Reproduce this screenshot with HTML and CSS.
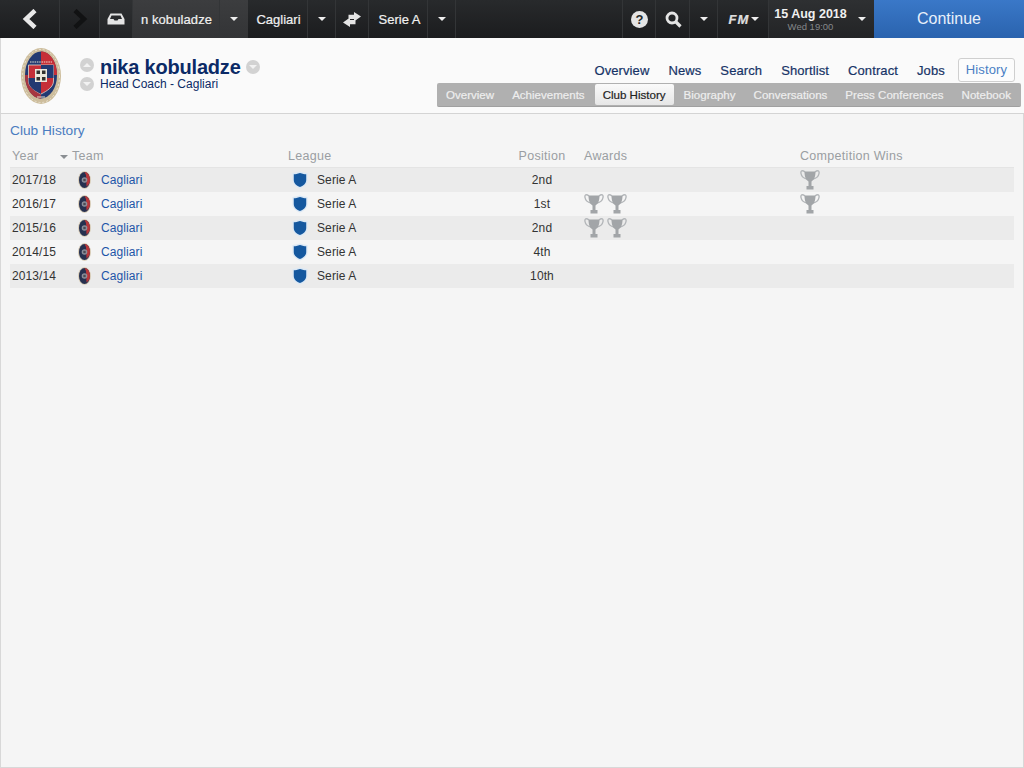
FILE: index.html
```html
<!DOCTYPE html>
<html>
<head>
    <title>Club History</title>
    <link rel="stylesheet" href="styles.css">
</head>
<body>
    <svg class="defs" width="0" height="0">
        <symbol id="crest" viewBox="0 0 40 56">
            <ellipse cx="20" cy="28" rx="20" ry="28" fill="#cdbd9c"/>
            <ellipse cx="20" cy="28" rx="18.500" ry="26.500" fill="none" stroke="#e9e2d2" stroke-width="1" stroke-dasharray="2 2"/>
            <ellipse cx="20" cy="27" rx="16" ry="23.500" fill="#233a72"/>
            <path d="M20 3.500C29 3.500 36 14 36 27H20Z" fill="#c62f38"/>
            <path d="M20 50.500C11 50.500 4 40 4 27H20Z" fill="#a83640"/>
            <path d="M7.500 17H32.500V33C32.500 39 26 43 20 46C14 43 7.500 39 7.500 33Z" fill="#c62f38" stroke="#ddd8cc" stroke-width=".8"/>
            <path d="M20 17H32.500V30H20ZM7.500 30H20V46C14 43 7.500 39 7.500 33Z" fill="#233a72"/>
            <rect x="14" y="21" width="12" height="13" fill="#ece8dc"/>
            <path d="M15.500 22.500h3.500v3.500h-3.500zM21 22.500h3.500v3.500h-3.500zM15.500 29h3.500v3.500h-3.500zM21 29h3.500v3.500h-3.500z" fill="#33312e"/>
            <path d="M9 14H31" stroke="#e6e0d0" stroke-width="1.200" stroke-dasharray="1.500 .8"/>
            <path d="M16 49H24" stroke="#e6e0d0" stroke-width="1"/>
        </symbol>
        <symbol id="crest-small" viewBox="0 0 13 18">
            <ellipse cx="6.500" cy="9" rx="6.500" ry="9" fill="#d8cdb8"/>
            <ellipse cx="6.500" cy="9" rx="5.500" ry="8" fill="#26304f"/>
            <path d="M6.500 1C10 1 12 5 12 9C12 12 10.500 14 8.500 15.500L8 4Z" fill="#b8363a"/>
            <circle cx="6.500" cy="9" r="2.800" fill="#8c8f9c"/>
            <rect x="5.300" y="7.800" width="2.400" height="2.400" fill="#4a4a55"/>
        </symbol>
        <symbol id="shield" viewBox="0 0 18 20">
            <path d="M9 .5C12 1.500 14.500 2 17.500 2V10C17.500 15 13 18 9 19.500C5 18 .5 15 .5 10V2C3.500 2 6 1.500 9 .5Z" fill="#dbe8f5"/>
            <path d="M9 2C12 3 14 3.500 16 3.500V10C16 14 12.500 16.500 9 18C5.500 16.500 2 14 2 10V3.500C4 3.500 6 3 9 2Z" fill="#15589f"/>
        </symbol>
        <symbol id="trophy" viewBox="0 0 20 22">
            <path d="M5 3C2 .5 .5 2 1 4.500C1.500 7.500 4 9.500 7 10" fill="none" stroke="#b4b7ba" stroke-width="1.400"/>
            <path d="M15 3C18 .5 19.500 2 19 4.500C18.500 7.500 16 9.500 13 10" fill="none" stroke="#b4b7ba" stroke-width="1.400"/>
            <path d="M4.500 2.500H15.500C15.500 8 14 11 11.500 12.500V17H13.500V20.500H6.500V17H8.500V12.500C6 11 4.500 8 4.500 2.500Z" fill="#a2a5a8"/>
        </symbol>
    </svg>

    <div class="topbar">
        <div class="seg seg-back">
            <svg width="16" height="20" viewBox="0 0 16 20"><path d="M13 1.500L4 10L13 18.500" fill="none" stroke="#e8e8e8" stroke-width="4.500"/></svg>
        </div>
        <div class="seg seg-forward">
            <svg width="16" height="20" viewBox="0 0 16 20"><path d="M3 1.500L12 10L3 18.500" fill="none" stroke="#111213" stroke-width="4.500"/></svg>
        </div>
        <div class="seg seg-inbox">
            <svg width="18" height="12" viewBox="0 0 18 12"><path d="M3.500 .5H14.500L17.500 6V11.500H.5V6ZM4.500 2.500L3 6H6.500L7.500 7.500H10.500L11.500 6H15L13.500 2.500Z" fill="#e4e4e4" fill-rule="evenodd"/></svg>
        </div>
        <div class="seg seg-name">n kobuladze</div>
        <div class="seg seg-drop seg-name-drop"><span class="caret"></span></div>
        <div class="seg seg-club">Cagliari</div>
        <div class="seg seg-drop"><span class="caret"></span></div>
        <div class="seg seg-swap">
            <svg width="18" height="15" viewBox="0 0 18 15"><path d="M11 0L18 4.500L11 9.500V7H5.500V2.800H11ZM7 5.500V8H12.500V12.200H7V15L0 10.500Z" fill="#e4e4e4"/></svg>
        </div>
        <div class="seg seg-league">Serie A</div>
        <div class="seg seg-drop"><span class="caret"></span></div>
        <div class="bar-gap"></div>
        <div class="seg seg-icon">
            <span class="help">?</span>
        </div>
        <div class="seg seg-search">
            <svg width="17" height="17" viewBox="0 0 17 17"><circle cx="7" cy="7" r="5" fill="none" stroke="#e4e4e4" stroke-width="2.800"/><path d="M10.500 10.500L15.500 15.500" stroke="#e4e4e4" stroke-width="3.200"/></svg>
        </div>
        <div class="seg seg-drop"><span class="caret"></span></div>
        <div class="seg seg-fm"><span class="fm">FM</span><span class="caret"></span></div>
        <div class="seg seg-date">
            <div class="date-text">
                <div class="date-main">15 Aug 2018</div>
                <div class="date-sub">Wed 19:00</div>
            </div>
            <span class="caret"></span>
        </div>
        <div class="continue">Continue</div>
    </div>

    <div class="header">
        <svg class="crest" width="40" height="56"><use href="#crest"/></svg>
        <div class="stepper">
            <span class="round"><span class="tri-up"></span></span>
            <span class="round"><span class="tri-down"></span></span>
        </div>
        <div class="person">
            <div class="person-name">nika kobuladze<span class="round"><span class="tri-down"></span></span></div>
            <div class="person-job">Head Coach - Cagliari</div>
        </div>
        <div class="menus">
            <div class="nav">
                <a class="nav-item">Overview</a>
                <a class="nav-item">News</a>
                <a class="nav-item">Search</a>
                <a class="nav-item">Shortlist</a>
                <a class="nav-item">Contract</a>
                <a class="nav-item">Jobs</a>
                <a class="nav-item nav-active">History</a>
            </div>
            <div class="subnav">
                <a class="sub-item">Overview</a>
                <a class="sub-item">Achievements</a>
                <a class="sub-item sub-active">Club History</a>
                <a class="sub-item">Biography</a>
                <a class="sub-item">Conversations</a>
                <a class="sub-item">Press Conferences</a>
                <a class="sub-item">Notebook</a>
            </div>
        </div>
    </div>

    <div class="content">
        <div class="panel-title">Club History</div>
        <div class="table">
            <div class="row row-head">
                <div class="col-year">Year<span class="sort"></span></div>
                <div>Team</div>
                <div>League</div>
                <div class="col-pos">Position</div>
                <div class="col-awards">Awards</div>
                <div>Competition Wins</div>
            </div>
            <div class="row">
                <div>2017/18</div>
                <div class="cell-team"><svg width="13" height="18"><use href="#crest-small"/></svg><a>Cagliari</a></div>
                <div class="cell-league"><svg width="16" height="18"><use href="#shield"/></svg>Serie A</div>
                <div class="col-pos">2nd</div>
                <div class="col-awards"></div>
                <div class="cups"><svg width="20" height="22"><use href="#trophy"/></svg></div>
            </div>
            <div class="row">
                <div>2016/17</div>
                <div class="cell-team"><svg width="13" height="18"><use href="#crest-small"/></svg><a>Cagliari</a></div>
                <div class="cell-league"><svg width="16" height="18"><use href="#shield"/></svg>Serie A</div>
                <div class="col-pos">1st</div>
                <div class="col-awards cups"><svg width="20" height="22"><use href="#trophy"/></svg><svg width="20" height="22"><use href="#trophy"/></svg></div>
                <div class="cups"><svg width="20" height="22"><use href="#trophy"/></svg></div>
            </div>
            <div class="row">
                <div>2015/16</div>
                <div class="cell-team"><svg width="13" height="18"><use href="#crest-small"/></svg><a>Cagliari</a></div>
                <div class="cell-league"><svg width="16" height="18"><use href="#shield"/></svg>Serie A</div>
                <div class="col-pos">2nd</div>
                <div class="col-awards cups"><svg width="20" height="22"><use href="#trophy"/></svg><svg width="20" height="22"><use href="#trophy"/></svg></div>
                <div></div>
            </div>
            <div class="row">
                <div>2014/15</div>
                <div class="cell-team"><svg width="13" height="18"><use href="#crest-small"/></svg><a>Cagliari</a></div>
                <div class="cell-league"><svg width="16" height="18"><use href="#shield"/></svg>Serie A</div>
                <div class="col-pos">4th</div>
                <div class="col-awards"></div>
                <div></div>
            </div>
            <div class="row">
                <div>2013/14</div>
                <div class="cell-team"><svg width="13" height="18"><use href="#crest-small"/></svg><a>Cagliari</a></div>
                <div class="cell-league"><svg width="16" height="18"><use href="#shield"/></svg>Serie A</div>
                <div class="col-pos">10th</div>
                <div class="col-awards"></div>
                <div></div>
            </div>
        </div>
    </div>
</body>
</html>
```

FILE: styles.css
```css
* {
    margin: 0;
    padding: 0;
    box-sizing: border-box;
}

html, body {
    height: 100%;
    overflow: hidden;
}

body {
    display: flex;
    flex-direction: column;
    background: #f5f5f5;
    font-family: "Liberation Sans", Arial, sans-serif;
    font-size: 12px;
    color: #333;
}

.defs {
    position: absolute;
}

/* top bar */
.topbar {
    display: flex;
    height: 38px;
    flex: none;
    background: linear-gradient(#282a2c, #1b1c1e);
    color: #f0f0f0;
    font-size: 13px;
    -webkit-text-stroke: 0.2px #f0f0f0;
}

.seg {
    display: flex;
    align-items: center;
    justify-content: center;
    flex: none;
    border-right: 1px solid #333537;
}

.seg-back { width: 60px; }
.seg-forward { width: 40px; }
.seg-inbox { width: 33px; background: linear-gradient(#2e3032, #232426); }
.seg-name { width: 87px; padding-left: 1px; letter-spacing: 0.1px; background: linear-gradient(#3c3d3f, #333436); }
.seg-name-drop { background: linear-gradient(#3c3d3f, #333436); border-right: none; }
.seg-drop { width: 28px; }
.seg-club { width: 60px; padding-left: 2px; }
.seg-swap { width: 33px; }
.seg-league { width: 59px; padding-left: 3px; }
.seg-icon { width: 33px; padding-left: 1px; }
.seg-search { width: 34px; padding-left: 1px; }
.seg-fm { width: 51px; gap: 2px; padding-left: 2px; }
.seg-date { width: 105px; gap: 11px; padding-right: 3px; background: linear-gradient(#2e3032, #232426); border-right: none; }

.bar-gap {
    flex: 1;
    border-right: 1px solid #333537;
}

.caret {
    width: 0;
    height: 0;
    border-left: 4px solid transparent;
    border-right: 4px solid transparent;
    border-top: 4px solid #eee;
}

.help {
    display: flex;
    align-items: center;
    justify-content: center;
    width: 17px;
    height: 17px;
    border-radius: 50%;
    background: #e4e4e4;
    color: #26282a;
    font-size: 13px;
    font-weight: bold;
    -webkit-text-stroke: 0;
}

.fm {
    font-size: 13px;
    font-weight: bold;
    font-style: italic;
    letter-spacing: 1px;
    color: #dcdcdc;
}

.date-main {
    font-size: 12.500px;
    font-weight: bold;
    -webkit-text-stroke: 0;
}

.date-sub {
    font-size: 9.500px;
    color: #85878a;
    text-align: center;
    -webkit-text-stroke: 0;
}

.continue {
    flex: none;
    width: 150px;
    display: flex;
    align-items: center;
    justify-content: center;
    background: linear-gradient(#3a78c8, #2a63ae);
    color: #e8f0fa;
    font-size: 16px;
    -webkit-text-stroke: 0;
}

/* person header */
.header {
    display: flex;
    flex: none;
    height: 76px;
    background: #fafafa;
    border-bottom: 1px solid #d4d4d4;
    border-left: 1px solid #d8d8d8;
    padding: 10px 3px 0 20px;
}

.stepper {
    display: flex;
    flex-direction: column;
    gap: 5px;
    margin: 10px 6px 0 19px;
}

.round {
    display: flex;
    align-items: center;
    justify-content: center;
    width: 14px;
    height: 14px;
    border-radius: 50%;
    background: #d2d2d2;
}

.tri-up {
    border-left: 4px solid transparent;
    border-right: 4px solid transparent;
    border-bottom: 4px solid #f2f2f2;
}

.tri-down {
    border-left: 4px solid transparent;
    border-right: 4px solid transparent;
    border-top: 4px solid #f2f2f2;
}

.person {
    margin-top: 7px;
    color: #0b2a66;
}

.person-name {
    display: flex;
    align-items: center;
    gap: 5px;
    font-size: 20px;
    font-weight: bold;
    line-height: 24px;
    letter-spacing: -0.2px;
}

.person-job {
    font-size: 12px;
    line-height: 12px;
    margin-top: -1px;
}

.menus {
    margin-left: auto;
    display: flex;
    flex-direction: column;
    align-items: flex-end;
    padding-top: 10px;
    gap: 1px;
}

.nav {
    display: flex;
    gap: 1px;
    padding-right: 6px;
}

.nav-item {
    padding: 0 8px;
    height: 24px;
    line-height: 23px;
    font-size: 13px;
    letter-spacing: 0.1px;
    color: #163366;
    border: 1px solid transparent;
    -webkit-text-stroke: 0.2px #163366;
}

.nav-active {
    margin-left: 3px;
    padding: 0 7px;
    line-height: 22px;
    color: #4a7fc4;
    background: #fcfcfc;
    border-color: #cfcfcf;
    border-radius: 3px;
    -webkit-text-stroke: 0;
}

.subnav {
    display: flex;
    gap: 2px;
    height: 24px;
    padding: 1px 2px 1px 1px;
    background: #b0b0b0;
    border-radius: 2px;
    border-bottom: 1px solid #a0a0a0;
}

.sub-item {
    padding: 0 8px;
    line-height: 22px;
    font-size: 11.550px;
    color: #eeeeee;
    -webkit-text-stroke: 0.2px #eeeeee;
}

.sub-active {
    color: #222;
    background: linear-gradient(#fafafa, #e6e6e6);
    border-radius: 2px;
    -webkit-text-stroke: 0.2px #222;
}

/* history table */
.content {
    flex: 1;
    padding: 9px 9px 0;
    border-left: 1px solid #d8d8d8;
    border-right: 1px solid #d8d8d8;
    border-bottom: 1px solid #d8d8d8;
}

.panel-title {
    font-size: 13.700px;
    line-height: 16px;
    color: #4a7cc0;
}

.table {
    margin-top: 9px;
}

.row {
    display: grid;
    grid-template-columns: 60px 216px 224px 60px 228px 1fr;
    align-items: center;
    height: 24px;
    padding-left: 2px;
    font-size: 12px;
    color: #333;
    letter-spacing: 0.1px;
}

.row:nth-child(even) {
    background: #ebebeb;
}

.row-head {
    height: 20px;
    padding-bottom: 3px;
    font-size: 12.500px;
    color: #9a9ea2;
    letter-spacing: 0.3px;
    border-bottom: 1px solid #e4e4e4;
}

.col-year {
    position: relative;
}

.sort {
    position: absolute;
    left: 48px;
    top: 6px;
    border-left: 4px solid transparent;
    border-right: 4px solid transparent;
    border-top: 4px solid #8a8e92;
}

.col-pos {
    text-align: center;
}

.col-awards {
    padding-left: 12px;
}

.cell-team,
.cell-league {
    display: flex;
    align-items: center;
}

.cell-team svg {
    margin: 0 10px 0 6px;
}

.cell-team a {
    color: #1d55a8;
}

.cell-league svg {
    margin: 0 9px 0 4px;
}

.cups {
    display: flex;
    gap: 3px;
}
```
